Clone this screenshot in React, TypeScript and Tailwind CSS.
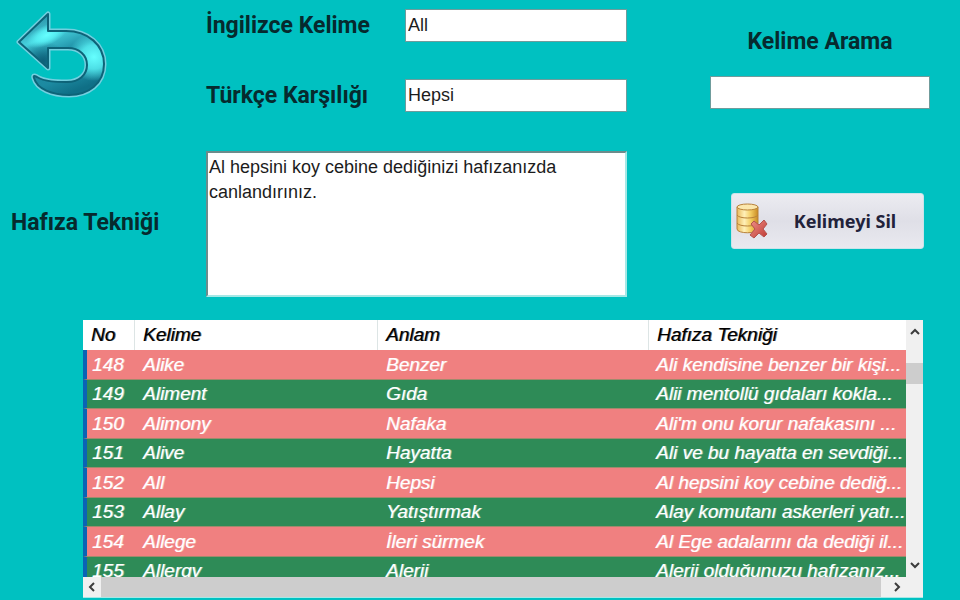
import React from "react";

type Word = { no: number; word: string; meaning: string; hint: string };

const words: Word[] = [
  { no: 148, word: "Alike", meaning: "Benzer", hint: "Ali kendisine benzer bir kişi..." },
  { no: 149, word: "Aliment", meaning: "Gıda", hint: "Alii mentollü gıdaları kokla..." },
  { no: 150, word: "Alimony", meaning: "Nafaka", hint: "Ali'm onu korur nafakasını ..." },
  { no: 151, word: "Alive", meaning: "Hayatta", hint: "Ali ve bu hayatta en sevdiği..." },
  { no: 152, word: "All", meaning: "Hepsi", hint: "Al hepsini koy cebine dediğ..." },
  { no: 153, word: "Allay", meaning: "Yatıştırmak", hint: "Alay komutanı askerleri yatı..." },
  { no: 154, word: "Allege", meaning: "İleri sürmek", hint: "Al Ege adalarını da dediği il..." },
  { no: 155, word: "Allergy", meaning: "Alerji", hint: "Alerji olduğunuzu hafızanız..." },
];

const labelClass =
  "font-['Roboto',sans-serif] text-[23px] leading-[30px] font-bold whitespace-nowrap text-[#062a2e]";
const fieldClass =
  "h-[33px] w-full min-w-0 border border-[#6f9c9c] bg-white px-[2px] text-[18px] text-[#1c1c1c] outline-none";

const arrowPath =
  "M33 3V20H51C73 20 89 34 89 53C89 73 73 84 54 84C37 84 22 78 19 67C18 64 20 65 22 66C30 71 42 71 52 71C64 71 72 64 72 54C72 44 64 37 53 37H33V57L4 31Z";

function BackIcon() {
  return (
    <svg viewBox="0 0 92 90" className="h-[90px] w-[92px]" aria-hidden="true">
      <defs>
        <linearGradient id="arrow" gradientUnits="userSpaceOnUse" x1="20" y1="8" x2="50" y2="84">
          <stop offset="0" stopColor="#2b93a8" />
          <stop offset="0.25" stopColor="#45cfdb" />
          <stop offset="0.5" stopColor="#1f8fa6" />
          <stop offset="0.8" stopColor="#1c8aa1" />
          <stop offset="1" stopColor="#0f6f86" />
        </linearGradient>
        <radialGradient id="shine">
          <stop offset="0" stopColor="#66ffff" />
          <stop offset="0.5" stopColor="#5af5f8" stopOpacity="0.8" />
          <stop offset="1" stopColor="#5af5f8" stopOpacity="0" />
        </radialGradient>
        <radialGradient id="shade">
          <stop offset="0" stopColor="#0d6079" />
          <stop offset="1" stopColor="#0d6079" stopOpacity="0" />
        </radialGradient>
        <clipPath id="arrowClip">
          <path d={arrowPath} />
        </clipPath>
      </defs>
      <g strokeLinejoin="round">
        <path d={arrowPath} fill="none" stroke="#74cfdf" strokeWidth="5" />
        <path d={arrowPath} fill="url(#arrow)" />
        <g clipPath="url(#arrowClip)">
          <ellipse cx="28" cy="50" rx="24" ry="20" fill="url(#shade)" />
          <ellipse cx="79" cy="46" rx="26" ry="24" fill="url(#shine)" />
          <ellipse cx="32" cy="24" rx="22" ry="10" fill="url(#shine)" transform="rotate(-25 32 24)" />
        </g>
        <path d={arrowPath} fill="none" stroke="#0d6378" strokeWidth="2" />
      </g>
    </svg>
  );
}

function DatabaseDeleteIcon() {
  return (
    <svg viewBox="0 0 32 36" className="h-9 w-8 shrink-0" aria-hidden="true">
      <defs>
        <linearGradient id="gold" x1="0" x2="1">
          <stop offset="0" stopColor="#e8b95a" />
          <stop offset="0.35" stopColor="#fff0b8" />
          <stop offset="0.65" stopColor="#f3cd62" />
          <stop offset="1" stopColor="#c98a22" />
        </linearGradient>
        <linearGradient id="red" x1="0" y1="0" x2="1" y2="1">
          <stop offset="0" stopColor="#ee9187" />
          <stop offset="1" stopColor="#bf3a35" />
        </linearGradient>
      </defs>
      <g stroke="#b8823a" strokeWidth="1">
        <path d="M1 4V26C1 31 22 31 22 26V4Z" fill="url(#gold)" />
        <ellipse cx="11.500" cy="4" rx="10.500" ry="3" fill="#fbe7ad" />
        <path d="M1 12C3 16 20 16 22 12M1 20C3 24 20 24 22 20" fill="none" />
      </g>
      <path
        d="M18 18L23 22L28 17L31 21L27 26L31 31L28 34L23 30L18 35L14 32L19 26L15 21Z"
        fill="url(#red)"
        stroke="#b5524d"
        strokeWidth="1"
      />
    </svg>
  );
}

function Chevron({ d }: { d: string }) {
  return (
    <svg viewBox="0 0 10 10" className="size-[10px]" fill="none" stroke="#3c3c3c" strokeWidth="2" aria-hidden="true">
      <path d={d} />
    </svg>
  );
}

function WordTable() {
  return (
    <section className="mr-[37px] ml-[83px] border-b border-[#a5e8e6] bg-[#f0f0f0]">
      <div className="flex h-[257px]">
        <div className="min-w-0 flex-1 overflow-hidden bg-white">
          <table className="w-full table-fixed border-separate border-spacing-0 text-left text-[19px] leading-[28px] whitespace-nowrap italic">
            <colgroup>
              <col className="w-[52px]" />
              <col className="w-[243px]" />
              <col className="w-[271px]" />
              <col />
            </colgroup>
            <thead>
              <tr className="h-[30px] text-black [text-shadow:1px_0_0_rgb(0_0_0/0.6)]">
                <th className="border-r border-[#dde5e5] p-0 pl-2 font-normal">No</th>
                <th className="border-r border-[#dde5e5] p-0 pl-2 font-normal">Kelime</th>
                <th className="border-r border-[#dde5e5] p-0 pl-2 font-normal">Anlam</th>
                <th className="p-0 pl-2 font-normal">Hafıza Tekniği</th>
              </tr>
            </thead>
            <tbody className="text-white [text-shadow:1px_0_0_rgb(255_255_255/0.5)]">
              {words.map((w) => (
                <tr
                  key={w.no}
                  className="odd:h-[30px] odd:bg-[#f08080] even:h-[29px] even:bg-[#2e8b57] [&>td]:border-b [&>td]:border-b-[#a08a6c]"
                >
                  <td className="border-l-4 border-l-[#0a64b4] p-0 pl-[5px]">{w.no}</td>
                  <td className="p-0 pl-2">{w.word}</td>
                  <td className="p-0 pl-2">{w.meaning}</td>
                  <td className="p-0 pl-[7px]">{w.hint}</td>
                </tr>
              ))}
            </tbody>
          </table>
        </div>
        <div className="flex w-[17px] flex-col">
          <button type="button" aria-label="Yukarı" className="flex h-6 items-center justify-center">
            <Chevron d="M1 7L5 3L9 7" />
          </button>
          <div className="flex-1 pt-[19px]">
            <div className="h-[21px] bg-[#cdcdcd]" />
          </div>
          <button type="button" aria-label="Aşağı" className="flex h-6 items-center justify-center">
            <Chevron d="M1 3L5 7L9 3" />
          </button>
        </div>
      </div>
      <div className="flex h-5">
        <button type="button" aria-label="Sola" className="flex w-[18px] items-center justify-center">
          <Chevron d="M7 1L3 5L7 9" />
        </button>
        <div className="flex-1 bg-[#cdcdcd]" />
        <button type="button" aria-label="Sağa" className="mr-[11px] flex w-[31px] items-center justify-center">
          <Chevron d="M3 1L7 5L3 9" />
        </button>
      </div>
    </section>
  );
}

export default function App() {
  return (
    <main className="min-h-screen bg-[#00c1c1] pt-[9px] font-['Liberation_Sans',Arial,sans-serif]">
      <div className="flex gap-[83px] pr-[30px] pl-[11px]">
        <form className="grid min-w-0 flex-1 grid-cols-[195px_199px_1fr] items-center gap-y-[37px]">
          <button type="button" aria-label="Geri" className="row-span-2 w-fit self-start pt-[2px] pl-[4px]">
            <BackIcon />
          </button>
          <label htmlFor="english" className={labelClass}>
            İngilizce Kelime
          </label>
          <input id="english" className={fieldClass} defaultValue="All" />
          <label htmlFor="turkish" className={labelClass}>
            Türkçe Karşılığı
          </label>
          <input id="turkish" className={fieldClass} defaultValue="Hepsi" />
          <label htmlFor="hint" className={labelClass}>
            Hafıza Tekniği
          </label>
          <textarea
            id="hint"
            className="col-span-2 mt-[2px] h-[146px] w-full resize-none border-2 border-[#a5e8e6] border-t-[#6c8c8c] border-l-[#6c8c8c] bg-white px-[1px] py-[2px] text-[18px] leading-[25px] text-[#1c1c1c] outline-none"
            defaultValue="Al hepsini koy cebine dediğinizi hafızanızda canlandırınız."
          />
        </form>
        <aside className="flex w-[220px] flex-col items-center pt-[18px]">
          <label htmlFor="search" className={labelClass}>
            Kelime Arama
          </label>
          <input id="search" className={`${fieldClass} mt-[19px]`} />
          <button
            type="button"
            className="mt-[84px] ml-[14px] flex h-14 w-[193px] items-center rounded-[3px] border border-[#c9e4ea] bg-linear-to-b from-[#ececf1] via-[#dfdfe7] to-[#e9e9ef] pl-1 font-['Noto_Sans',sans-serif] text-[18px] font-bold text-[#22223a]"
          >
            <DatabaseDeleteIcon />
            <span className="flex-1 text-center">Kelimeyi Sil</span>
          </button>
        </aside>
      </div>
      <div className="mt-[23px]">
        <WordTable />
      </div>
    </main>
  );
}
